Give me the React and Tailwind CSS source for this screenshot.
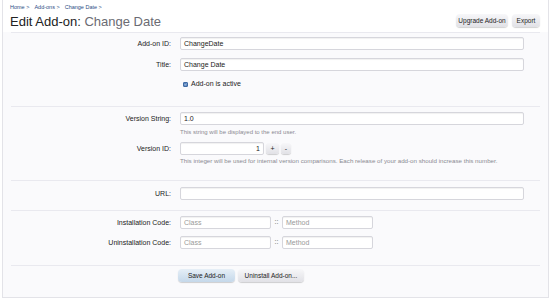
import React from 'react';

const font = { fontFamily: '"Liberation Sans", Arial, sans-serif' };

function Label({ children }) {
  return <div className="w-[177px] shrink-0 text-right text-[7px] text-[#222] pr-[9px] leading-[13px]">{children}</div>;
}

function TextInput({ value, placeholder, className = 'w-[344px]', align = 'left' }) {
  return (
    <div
      className={`h-[13px] rounded-[2px] border border-[#d6d6dc] bg-white shadow-[inset_0_1px_1px_rgba(0,0,0,0.06)] px-[3px] text-[7px] leading-[11px] ${align === 'right' ? 'text-right' : ''} ${value ? 'text-[#222]' : 'text-[#999]'} ${className}`}
    >
      {value || placeholder}
    </div>
  );
}

function Btn({ children, primary, className }) {
  return (
    <button
      className={`h-[13px] rounded-[4px] text-center text-[6.5px] leading-[13px] text-[#222] shadow-[0_1px_1px_rgba(0,0,0,0.18)] ${className} ${
        primary ? 'bg-gradient-to-b from-[#e6eff7] to-[#c5d8ea]' : 'bg-gradient-to-b from-[#f7f7f9] to-[#e1e1e6]'
      }`}
    >
      {children}
    </button>
  );
}

function Divider() {
  return <div className="mx-[8px] h-px bg-[#e9e9ef]" />;
}

export default function App() {
  return (
    <div className="w-[551px] h-[300px] bg-white overflow-hidden" style={font}>
      <div className="mx-[2px] h-[298px] border-x border-b border-[#e3e3e8] bg-[#fafafc] flex flex-col">
        <div className="bg-white pl-[7px] pr-[8px] pt-[4px] flex justify-between items-start h-[32px]">
          <div>
            <div className="flex gap-[5px] text-[5.5px] leading-[7px] text-[#2d4d84]">
              <span>Home &gt;</span>
              <span>Add-ons &gt;</span>
              <span>Change Date &gt;</span>
            </div>
            <div className="mt-[2px] text-[13px] leading-[18px] text-[#222]">
              Edit Add-on: <span className="text-[#6b6b73]">Change Date</span>
            </div>
          </div>
          <div className="flex gap-[4px] mt-[10px]">
            <Btn className="w-[52px]">Upgrade Add-on</Btn>
            <Btn className="w-[28px]">Export</Btn>
          </div>
        </div>
        <Divider />

        <div className="pt-[4px] flex flex-col gap-[8px]">
          <div className="flex"><Label>Add-on ID:</Label><TextInput value="ChangeDate" /></div>
          <div className="flex"><Label>Title:</Label><TextInput value="Change Date" /></div>
        </div>
        <div className="flex items-center mt-[8px] h-[10px]">
          <div className="w-[177px]" />
          <div className="ml-[3px] w-[5px] h-[5px] rounded-[1px] bg-[#5a86c0] border border-[#3f6aa3] flex items-center justify-center">
            <svg viewBox="0 0 6 6" className="w-[5px] h-[5px]"><path d="M1 3 L2.5 4.5 L5 1.2" stroke="white" strokeWidth="1" fill="none" /></svg>
          </div>
          <span className="ml-[3px] text-[7px] text-[#222]">Add-on is active</span>
        </div>
        <div className="h-[17px]" />
        <Divider />

        <div className="pt-[5px] flex"><Label>Version String:</Label><TextInput value="1.0" /></div>
        <div className="pl-[177px] mt-[4px] text-[6px] leading-[7px] text-[#8a8a92]">This string will be displayed to the end user.</div>
        <div className="mt-[6px] flex items-center">
          <Label>Version ID:</Label>
          <TextInput value="1" align="right" className="w-[84px]" />
          <div className="ml-[2px] flex gap-[2px]">
            <button className="h-[11px] w-[13px] rounded-[3px] bg-gradient-to-b from-[#f7f7f9] to-[#e1e1e6] shadow-[0_1px_1px_rgba(0,0,0,0.18)] text-[7px] leading-[11px] text-[#222]">+</button>
            <button className="h-[11px] w-[10px] rounded-[3px] bg-gradient-to-b from-[#f7f7f9] to-[#e1e1e6] shadow-[0_1px_1px_rgba(0,0,0,0.18)] text-[7px] leading-[11px] text-[#222]">-</button>
          </div>
        </div>
        <div className="pl-[177px] mt-[2px] text-[6.2px] leading-[7px] text-[#8a8a92]">
          This integer will be used for internal version comparisons. Each release of your add-on should increase this number.
        </div>
        <div className="h-[16px]" />
        <Divider />

        <div className="pt-[6px] flex"><Label>URL:</Label><TextInput value="" /></div>
        <div className="h-[10px]" />
        <Divider />

        <div className="pt-[5px] flex flex-col gap-[7px]">
          <div className="flex items-center">
            <Label>Installation Code:</Label>
            <TextInput placeholder="Class" className="w-[91px]" />
            <span className="w-[11px] text-center text-[7px] text-[#555]">::</span>
            <TextInput placeholder="Method" className="w-[91px]" />
          </div>
          <div className="flex items-center">
            <Label>Uninstallation Code:</Label>
            <TextInput placeholder="Class" className="w-[91px]" />
            <span className="w-[11px] text-center text-[7px] text-[#555]">::</span>
            <TextInput placeholder="Method" className="w-[91px]" />
          </div>
        </div>
        <div className="h-[16px]" />
        <Divider />
        <div className="mt-[3px] pl-[175px] flex gap-[3px]">
          <Btn primary className="w-[57px]">Save Add-on</Btn>
          <Btn className="w-[66px]">Uninstall Add-on...</Btn>
        </div>
      </div>
    </div>
  );
}
